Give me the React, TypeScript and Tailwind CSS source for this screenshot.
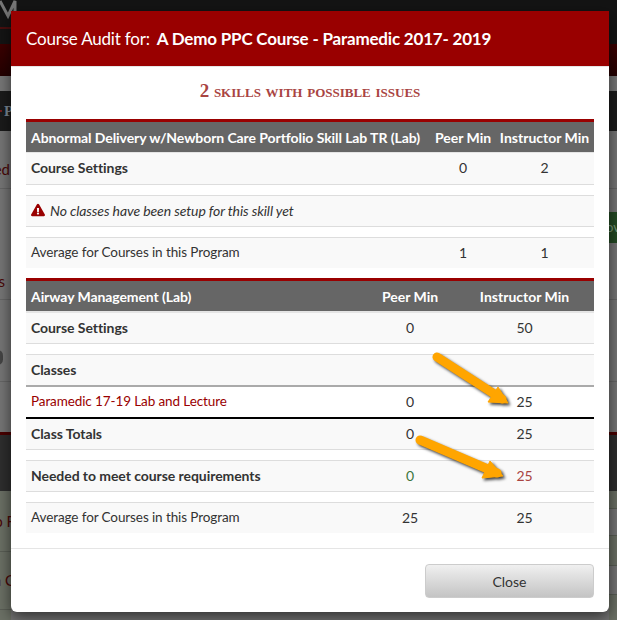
import { FaExclamationTriangle } from "react-icons/fa";

function Cell({ className = "", children }: { className?: string; children?: React.ReactNode }) {
  return <div className={`flex items-center justify-center ${className}`}>{children}</div>;
}

function SkillHeader({ name, peer, instructor, nameW, peerW, instW }: { name: string; peer: string; instructor: string; nameW: string; peerW: string; instW: string }) {
  return (
    <div className="flex h-[33px] border-t-[3px] border-[#990000] bg-[#666666] text-[14px] font-bold text-white items-center">
      <div className={`${nameW} pl-[5px] whitespace-nowrap tracking-[-0.08px]`}>{name}</div>
      <Cell className={peerW}>{peer}</Cell>
      <Cell className={instW}>{instructor}</Cell>
    </div>
  );
}

function Row({ label, peer, inst, bold, cols, bg = "bg-[#f9f9f9]", border = "border-b border-[#dddddd]", h = "h-[32px]", labelClass = "", peerClass = "", instClass = "" }: any) {
  return (
    <div className={`flex items-center pb-[2px] ${h} ${bg} ${border} text-[#333333] text-[14px]`}>
      <div className={`${cols[0]} pl-[5px] whitespace-nowrap ${bold ? "font-bold tracking-[-0.06px]" : "text-[13.5px] leading-[21px] tracking-[-0.1px]"} ${labelClass}`}>{label}</div>
      <Cell className={`${cols[1]} ${peerClass}`}>{peer}</Cell>
      <Cell className={`${cols[2]} ${instClass}`}>{inst}</Cell>
    </div>
  );
}

const colsA = ["w-[405px]", "w-[64px]", "w-[99px]"];
const colsB = ["w-[339px]", "w-[90px]", "w-[139px]"];

export default function App() {
  return (
    <div className="relative w-[617px] h-[620px] overflow-hidden bg-[#767676]" style={{ fontFamily: 'Lato, sans-serif' }}>
      {/* page behind the dialog */}
      <div className="flex flex-col h-full text-[15px]">
        <div className="h-[44px] bg-[#141414] relative shrink-0">
          <svg className="absolute left-0 top-0" width="20" height="30" viewBox="0 0 20 30">
            <path d="M0 1 L8 16 L15 1 L15 18" fill="none" stroke="#777777" strokeWidth="3" />
            <rect x="0" y="27" width="14" height="2" fill="#4a0f0f" />
          </svg>
        </div>
        <div className="h-[32px] shrink-0 bg-gradient-to-b from-[#3d0000] to-[#240000]" />
        <div className="h-[15px] shrink-0 bg-[#777777]" />
        <div className="h-[40px] shrink-0 bg-[#1b1b1b] flex items-center gap-[2px] text-[#7d8a96] font-bold text-[15px]" style={{ fontFamily: '"Liberation Serif", serif' }}>
          <span className="w-[2px] h-[2px] bg-[#7a2020]" />
          <span>P</span>
        </div>
        <div className="h-[58px] shrink-0 border-b border-[#666666] relative text-[#4a0707]">
          <span className="absolute right-[607px] top-[27px]">ed</span>
        </div>
        <div className="h-[111px] shrink-0 border-b border-[#666666] relative">
          <div className="absolute left-[606px] top-[23px] w-[11px] h-[31px] bg-[#234a23] text-[#7a9a7a] flex items-center text-[13px] overflow-hidden">ov</div>
          <span className="absolute right-[612px] top-[81px] text-[#4a0707]">s</span>
        </div>
        <div className="h-[82px] shrink-0 border-b border-[#666666] relative">
          <span className="absolute right-[614px] top-[50px] w-[11px] h-[15px] rounded-full bg-[#444444]" />
        </div>
        <div className="h-[50px] shrink-0" />
        <div className="h-[59px] shrink-0 bg-[#2e2e2e] border-t-[3px] border-[#4a0000]" />
        <div className="flex-1 flex justify-between">
          <div className="w-[11px] bg-[#6b7065] flex flex-col text-[#4a0707]">
            <div className="h-[61px] border-b border-[#5a5e55] flex items-center justify-end whitespace-nowrap"><span className="-mr-[4px]">o F</span></div>
            <div className="h-[58px] border-b border-[#5a5e55] flex items-center justify-end whitespace-nowrap"><span className="-mr-[4px]">a C</span></div>
          </div>
          <div className="w-[8px] flex flex-col">
            <div className="h-[18px] bg-[#6b7065] border-b border-[#5a5e55]" />
            <div className="h-[27px] bg-[#767676] border-b border-[#5a5e55]" />
            <div className="h-[30px] bg-[#6b7065] border-b border-[#5a5e55]" />
            <div className="h-[29px] bg-[#767676] border-b border-[#5a5e55]" />
            <div className="flex-1 bg-[#6b7065]" />
          </div>
        </div>
      </div>

      {/* dialog */}
      <div className="absolute left-[11px] top-[11px] w-[598px] h-[601px] bg-white rounded-b-[6px] shadow-[0_5px_15px_rgba(0,0,0,0.6)] flex flex-col">
        <div className="h-[56px] shrink-0 bg-[#990000] border-b border-[#e5e5e5] flex items-center pl-[15px] text-white text-[17px] tracking-[-0.2px] whitespace-nowrap">
          <span>Course Audit for:</span>
          <span className="font-bold ml-[7px]">A Demo PPC Course - Paramedic 2017- 2019</span>
        </div>

        <div className="h-[52px] pb-[4px] shrink-0 flex items-center justify-center text-[#a94442] font-bold text-[19px] [font-variant-caps:small-caps]" style={{ fontFamily: '"Liberation Serif", serif' }}>
          2 skills with possible issues
        </div>

        <div className="mx-[15px] flex flex-col">
          <SkillHeader name="Abnormal Delivery w/Newborn Care Portfolio Skill Lab TR (Lab)" peer="Peer Min" instructor="Instructor Min" nameW="w-[405px]" peerW="w-[64px]" instW="w-[99px]" />
          <div className="h-[1px] bg-[#e5e5e5]" />
          <Row cols={colsA} label="Course Settings" peer="0" inst="2" bold />
          <div className="h-[10px]" />
          <div className="flex items-center gap-[5px] h-[32px] pb-[2px] pl-[5px] bg-[#f9f9f9] border-y border-[#dddddd] text-[14px] tracking-[-0.1px] italic text-[#333333]">
            <FaExclamationTriangle className="text-[#990000] w-[14px] h-[14px]" />
            <span>No classes have been setup for this skill yet</span>
          </div>
          <div className="h-[10px]" />
          <Row cols={colsA} label="Average for Courses in this Program" peer="1" inst="1" border="border-t border-[#dddddd]" h="h-[31px]" />

          <div className="h-[10px]" />
          <SkillHeader name="Airway Management (Lab)" peer="Peer Min" instructor="Instructor Min" nameW="w-[339px]" peerW="w-[90px]" instW="w-[139px]" />
          <div className="h-[2px] bg-[#e5e5e5]" />
          <Row cols={colsB} label="Course Settings" peer="0" inst="50" bold h="h-[31px]" />
          <div className="h-[10px]" />
          <Row cols={colsB} label="Classes" bold border="border-t border-[#dddddd]" h="h-[31px]" />
          <div className="h-[2px] bg-[#aaaaaa]" />
          <Row cols={colsB} label="Paramedic 17-19 Lab and Lecture" peer="0" inst="25" bg="bg-white" border="" h="h-[30px]" labelClass="text-[#990000]" />
          <div className="h-[2px] bg-black" />
          <Row cols={colsB} label="Class Totals" peer="0" inst="25" bold h="h-[31px]" />
          <div className="h-[10px]" />
          <Row cols={colsB} label="Needed to meet course requirements" peer="0" inst="25" bold border="border-y border-[#dddddd]" peerClass="text-[#3c763d]" instClass="text-[#a94442]" />
          <div className="h-[10px]" />
          <Row cols={colsB} label="Average for Courses in this Program" peer="25" inst="25" border="border-t border-[#dddddd]" h="h-[31px]" />
        </div>

        <div className="mt-[15px] flex-1 border-t border-[#e5e5e5] flex justify-end items-start pt-[15px] pr-[15px]">
          <button className="w-[169px] h-[34px] rounded-[4px] border border-[#cccccc] bg-gradient-to-b from-[#f0f0f0] to-[#c4c4c4] text-[#333333] text-[14px]">Close</button>
        </div>
      </div>

      {/* annotation arrows */}
      <svg className="absolute inset-0 drop-shadow-[2px_2px_1.5px_rgba(0,0,0,0.75)]" width="617" height="620" viewBox="0 0 617 620">
        <path d="M437 357 L502 399" stroke="#ffa500" strokeWidth="9" strokeLinecap="round" fill="none" />
        <path d="M508 403 L498 387 L488 402 Z" fill="#ffa500" stroke="#ffa500" strokeLinejoin="round" />
        <path d="M420 440 L497 473" stroke="#ffa500" strokeWidth="9" strokeLinecap="round" fill="none" />
        <path d="M503 476 L490 461 L482 478 Z" fill="#ffa500" stroke="#ffa500" strokeLinejoin="round" />
      </svg>
    </div>
  );
}
